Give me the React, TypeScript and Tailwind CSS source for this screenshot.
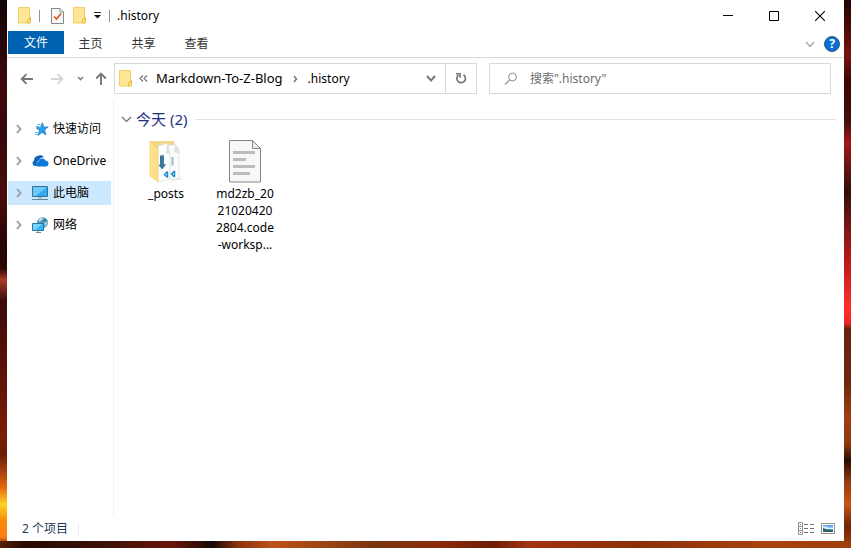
import type { ReactNode } from "react";

function FolderIcon() {
  return (
    <svg width="14" height="17" viewBox="0 0 14 17" aria-hidden="true">
      <path d="M.5.5h11v15.500H.5z" fill="#ffe695" stroke="#f0cf63" />
      <path d="M11.500 10.500h1v5.500h-3v-3.500h2z" fill="#ffe184" stroke="#e8c04a" />
    </svg>
  );
}

function CheckPageIcon() {
  return (
    <svg width="13" height="16" viewBox="0 0 13 16" aria-hidden="true">
      <path d="M.5.5h8.5l3.500 3.500v11.500H.5z" fill="#f8f8f8" stroke="#85898c" />
      <path d="M9 .5V4h3.500" fill="#fff" stroke="#85898c" />
      <path d="M3 8.500l2.500 2.500L10 5.500" fill="none" stroke="#e8571f" strokeWidth="1.700" />
    </svg>
  );
}

function Arrow({ kind }: { kind: "left" | "right" | "up" }) {
  const turn = { left: "", right: "rotate(180 7 7)", up: "rotate(90 7 7)" }[kind];
  return (
    <svg width="14" height="14" viewBox="0 0 14 14" aria-hidden="true">
      <path
        d="M13 7H2M6.500 2.200L1.700 7l4.800 4.800"
        transform={turn}
        fill="none"
        stroke={kind === "right" ? "#d4d4d4" : "#777"}
        strokeWidth="1.900"
      />
    </svg>
  );
}

type ChevronProps = { w: number; h: number; color: string; weight: number };

function ChevronDown({ w, h, color, weight }: ChevronProps) {
  return (
    <svg width={w} height={h} viewBox={`0 0 ${w} ${h}`} aria-hidden="true">
      <path d={`M1 1L${w / 2} ${h - 1.5}L${w - 1} 1`} fill="none" stroke={color} strokeWidth={weight} />
    </svg>
  );
}

function ChevronRight({ w, h, color, weight }: ChevronProps) {
  return (
    <svg width={w} height={h} viewBox={`0 0 ${w} ${h}`} aria-hidden="true">
      <path d={`M1 1L${w - 1.5} ${h / 2}L1 ${h - 1}`} fill="none" stroke={color} strokeWidth={weight} />
    </svg>
  );
}

function ChevronLeftPair() {
  return (
    <svg width="9" height="7" viewBox="0 0 9 7" aria-hidden="true">
      <path d="M4 .5l-3 3 3 3M8 .5l-3 3 3 3" fill="none" stroke="#777" strokeWidth="1.200" />
    </svg>
  );
}

function QuickAccessIcon() {
  return (
    <svg width="16" height="16" viewBox="0 0 16 16" aria-hidden="true">
      <path d="M9.500 1.500l1.100 4.400h4.600l-3.500 3 1.300 5.100-4-2.500-4 3 1.400-5L3 6.800l4.500-.6z" fill="#2b9fe8" stroke="#1579c4" strokeWidth=".6" />
      <path d="M4.500 3.500h3M3 5.500h3M2 11.500h3M2 13.500h3" stroke="#5db8ef" />
    </svg>
  );
}

function OneDriveIcon() {
  return (
    <svg width="17" height="16" viewBox="0 0 17 16" aria-hidden="true">
      <path d="M3 13a2.900 2.900 0 0 1-.8-5.500 4.200 4.200 0 0 1 3.300-4.400 4.500 4.500 0 0 1 6.600 1.300C9.500 4 7.800 5.500 7.200 7.500 4.800 7.800 3.800 10.500 5 13z" fill="#0a66bd" />
      <path d="M6.500 13.500a2.500 2.500 0 0 1 .2-5 3.600 3.600 0 0 1 6.900-.7 2.700 2.700 0 0 1 2.900 3 2.700 2.700 0 0 1-2.500 2.700z" fill="#0a78d7" />
    </svg>
  );
}

function ComputerIcon() {
  return (
    <svg width="17" height="16" viewBox="0 0 17 16" aria-hidden="true">
      <path d="M.5 1.500h15v10H.5z" fill="#36a9ee" stroke="#37738f" />
      <path d="M1 2h14L4 11H1z" fill="#6bc9fb" />
      <path d="M6 12h4v2H6z" fill="#a9c6d5" />
      <path d="M0 14.500h16" stroke="#6d8795" />
    </svg>
  );
}

function NetworkIcon() {
  return (
    <svg width="17" height="16" viewBox="0 0 17 16" aria-hidden="true">
      <circle cx="10.500" cy="5.700" r="5.500" fill="#4f94b8" />
      <path d="M6.500 2.500c2-2 4-1.800 5-1.300l-1.500 2.300-3 1.500z" fill="#b6d9e6" />
      <path d="M12 5l3.500-.5v3L13 9.500z" fill="#9bcbdc" />
      <path d="M12.500 1.500l2 2-1 1.500-2-1z" fill="#377a9c" />
      <path d="M.5 6.500h11v7H.5z" fill="#38b4f2" stroke="#27779e" />
      <path d="M1 7h9l-7 6H1z" fill="#7ad3fb" />
      <path d="M4 15.500h5M6 14v1" stroke="#688b9c" />
    </svg>
  );
}

function PostsFolderIcon() {
  return (
    <svg width="34" height="43" viewBox="0 0 34 43" aria-hidden="true">
      <path d="M1 1h24v30H9z" fill="#f3d688" />
      <path d="M30 37l4 2-14 3z" fill="#e9e9e9" />
      <path d="M18 6l8-2 4 5v30H18z" fill="#fbfbfb" stroke="#cfd4d8" strokeWidth=".6" />
      <path d="M9 6l9-3 3 10v26L9 42z" fill="#fdfdfd" stroke="#cfd4d8" strokeWidth=".6" />
      <path d="M18 3l-1 10 4 2z" fill="#e0e3e5" />
      <path d="M26 4l-1 8 5 2V9z" fill="#e0e3e5" />
      <path d="M11 15l1.300 1 1.300-1.300 1.300 1v8.500h2.300l-4 5.300-3.700-4.500 1.500-.5z" fill="#35789c" />
      <path d="M22.500 17v9l2-1v-8z" fill="#9cbfce" />
      <path d="M18.500 31.500l-3 3 3 3M18.500 31.500v6M25.500 31l-3 3 3 3M25.500 31v6" fill="none" stroke="#1b8dcc" strokeWidth="1.500" />
      <path d="M1 1l8 8v33L1 36z" fill="#ffe08a" stroke="#f4cb65" strokeWidth=".6" />
    </svg>
  );
}

function TextFileIcon() {
  return (
    <svg width="32" height="43" viewBox="0 0 32 43" aria-hidden="true">
      <path d="M.5.5h23l8 8v33.500H.5z" fill="#f8f8f8" stroke="#858585" />
      <path d="M23.500.5v8h8z" fill="#e9e9e9" stroke="#858585" />
      <path d="M4 12.500h22M4 19.500h13M4 26.500h22M4 33.500h17" stroke="#bdbdbd" strokeWidth="3" />
    </svg>
  );
}

function Backdrop() {
  return (
    <div aria-hidden="true" className="absolute inset-0 bg-[#7a2407]">
      <div className="absolute inset-y-0 left-0 w-2 bg-[linear-gradient(to_bottom,#120406_0%,#2a080a_9%,#42090c_17%,#35080a_24%,#4a0d0c_35%,#260504_45%,#2c0504_49%,#a63b27_51%,#3c0b08_55%,#611407_70%,#7b1c06_79%,#6b1c06_83%,#a64010_86%,#e36b0c_89%,#ffd228_92%,#f78a0b_95%,#ff7b16_98%,#3c1306_100%)]" />
      <div className="absolute inset-y-0 right-0 w-2 bg-[linear-gradient(to_bottom,#210507_0%,#4b0909_5%,#7a1110_10%,#3a0605_15%,#40100a_22%,#a01716_26%,#30100b_35%,#7e1714_42%,#b51918_47%,#ff2f2e_56%,#ed2524_59%,#68200f_60%,#6a2b10_70%,#a33c0e_76%,#8d3b0d_81%,#280e05_84%,#973c0e_88%,#c95313_92%,#702408_96%,#ab3c0a_100%)]" />
      <div className="absolute inset-x-0 bottom-0 h-[7px] bg-[linear-gradient(to_right,#552006_0%,#250902_3%,#3d1207_13%,#6b1409_20%,#180807_25%,#8a330d_28%,#be5118_32%,#7a360e_44%,#8b2908_52%,#6d1c07_58%,#a33210_62%,#8a3009_75%,#a9420e_90%,#9e3d0a_100%)]" />
    </div>
  );
}

function NavItem({ label, icon, selected = false }: { label: string; icon: ReactNode; selected?: boolean }) {
  return (
    <li>
      <button
        type="button"
        className={
          selected
            ? "flex h-6 w-full items-center bg-[#cce8ff] pl-2 text-left"
            : "flex h-6 w-full items-center pl-2 text-left"
        }
      >
        <ChevronRight w={6} h={10} color="#9b9b9b" weight={1.8} />
        <span className="ml-2.5 flex w-[17px] justify-center">{icon}</span>
        <span className="ml-1 whitespace-nowrap">{label}</span>
      </button>
    </li>
  );
}

const ribbonTabs = ["主页", "共享", "查看"];

export default function App() {
  return (
    <div className="relative h-screen overflow-hidden px-[7px] pb-[7px] font-['Noto_Sans','Noto_Sans_CJK_SC',sans-serif] text-xs text-black">
      <Backdrop />
      <div className="relative flex h-full flex-col bg-white">
        <header className="flex h-[31px] shrink-0 items-center pl-[11px]">
          <FolderIcon />
          <span className="ml-[7px] h-3 w-px bg-[#929292]" />
          <button type="button" aria-label="属性" className="ml-[11px]"><CheckPageIcon /></button>
          <button type="button" aria-label="新建文件夹" className="ml-[9px]"><FolderIcon /></button>
          <button type="button" aria-label="自定义快速访问工具栏" className="ml-[7px]">
            <svg width="7" height="7" viewBox="0 0 7 7" aria-hidden="true">
              <path d="M0 .5h7" stroke="#222" />
              <path d="M0 3h7L3.500 6.500z" fill="#111" />
            </svg>
          </button>
          <span className="ml-2 h-3 w-px bg-[#929292]" />
          <h1 className="ml-[7px]">.history</h1>
          <div className="ml-auto flex h-full">
            <button type="button" aria-label="最小化" className="flex w-[46px] items-center justify-center">
              <svg width="10" height="11" viewBox="0 0 10 11"><path d="M0 5.500h10" stroke="#000" /></svg>
            </button>
            <button type="button" aria-label="最大化" className="flex w-[45px] items-center justify-center">
              <svg width="10" height="10" viewBox="0 0 10 10"><path d="M.5.500h9v9h-9z" fill="none" stroke="#000" /></svg>
            </button>
            <button type="button" aria-label="关闭" className="flex w-12 items-center justify-center">
              <svg width="10" height="10" viewBox="0 0 10 10"><path d="M0 0l10 10M10 0L0 10" stroke="#000" strokeWidth="1.100" /></svg>
            </button>
          </div>
        </header>

        <nav aria-label="功能区" className="flex h-[27px] shrink-0 items-start border-b border-[#dadbdc] pl-px text-[#333]">
          <button type="button" className="h-[23px] w-14 bg-[#0063b1] text-white">文件</button>
          {ribbonTabs.map((tab) => (
            <button key={tab} type="button" className="h-[25px] w-[53px]">{tab}</button>
          ))}
          <div className="ml-auto flex h-6 items-center gap-[9px] pt-0.5 pr-1">
            <button type="button" aria-label="展开功能区">
              <ChevronDown w={10} h={7} color="#a5a5a5" weight={1.3} />
            </button>
            <button type="button" aria-label="帮助" className="size-4 rounded-full border border-[#2b5c88] bg-[#0a70d0] text-xs leading-[14px] font-bold text-white">?</button>
          </div>
        </nav>

        <div className="flex shrink-0 items-center pt-[5px] pr-[13px] pb-1">
          <div className="flex w-[107px] shrink-0 items-center pl-[13px]">
            <button type="button" aria-label="后退"><Arrow kind="left" /></button>
            <button type="button" aria-label="前进" className="ml-4"><Arrow kind="right" /></button>
            <button type="button" aria-label="最近位置" className="ml-[13px]">
              <ChevronDown w={7} h={5} color="#808080" weight={1.6} />
            </button>
            <button type="button" aria-label="上移" className="ml-2.5"><Arrow kind="up" /></button>
          </div>
          <div className="flex h-[31px] flex-[363] items-stretch border border-[#d9d9d9]">
            <div className="flex flex-1 items-center pl-1">
              <FolderIcon />
              <button type="button" aria-label="上级文件夹" className="ml-1.5 flex">
                <ChevronLeftPair />
              </button>
              <button type="button" className="ml-2 whitespace-nowrap text-[13px]">Markdown-To-Z-Blog</button>
              <span className="mx-2.5"><ChevronRight w={5} h={8} color="#777" weight={1.5} /></span>
              <button type="button">.history</button>
            </div>
            <button type="button" aria-label="以前的位置" className="flex w-7 items-center justify-center">
              <ChevronDown w={10} h={7} color="#777" weight={1.9} />
            </button>
            <button type="button" aria-label="刷新" className="flex w-[31px] items-center justify-center border-l border-[#d9d9d9]">
              <svg width="12" height="13" viewBox="0 0 12 13" aria-hidden="true">
                <path d="M8.500 2.800a4.300 4.300 0 1 1-5 .2" fill="none" stroke="#777" strokeWidth="1.700" />
                <path d="M1 1.800h4v4" fill="none" stroke="#777" strokeWidth="1.600" />
              </svg>
            </button>
          </div>
          <label className="ml-3 flex h-[31px] flex-[342] items-center border border-[#d9d9d9]">
            <svg className="ml-3.5 shrink-0" width="14" height="14" viewBox="0 0 14 14" aria-hidden="true">
              <circle cx="8.500" cy="5" r="3.900" fill="none" stroke="#8c8c8c" />
              <path d="M5.700 7.800L1 12.500" stroke="#8c8c8c" strokeWidth="1.200" />
            </svg>
            <input type="search" aria-label="搜索" placeholder={'搜索".history"'} className="ml-3 w-full min-w-0 bg-transparent outline-none placeholder:text-[#6d6d6d]" />
          </label>
        </div>

        <div className="flex min-h-0 flex-1 pt-0.5">
          <nav aria-label="导航窗格" className="w-[107px] shrink-0 border-r border-[#f2f2f2] pt-[17px] pr-0.5 pl-px">
            <ul className="flex flex-col gap-2">
              <NavItem label="快速访问" icon={<QuickAccessIcon />} />
              <NavItem label="OneDrive" icon={<OneDriveIcon />} />
              <NavItem label="此电脑" icon={<ComputerIcon />} selected />
              <NavItem label="网络" icon={<NetworkIcon />} />
            </ul>
          </nav>
          <main className="min-w-0 flex-1 pt-2 pr-2 pl-[7px]">
            <h2 className="flex items-center text-[15px] leading-[22px] text-[#1e3287]">
              <ChevronDown w={11} h={7} color="#6c6c6c" weight={1.2} />
              <span className="ml-1 whitespace-nowrap">今天 (2)</span>
              <span className="ml-2 h-px flex-1 bg-[#e2e2e2]" />
            </h2>
            <ul className="mt-2.5 ml-2 flex gap-2 text-center leading-[17px]">
              <li>
                <button type="button" className="flex w-[74px] flex-col items-center">
                  <PostsFolderIcon />
                  <span className="mt-0.5">_posts</span>
                </button>
              </li>
              <li>
                <button type="button" className="flex w-[68px] flex-col items-center">
                  <TextFileIcon />
                  <span className="mt-0.5">md2zb_20<br />21020420<br />2804.code<br />-worksp...</span>
                </button>
              </li>
            </ul>
          </main>
        </div>

        <footer className="flex h-[25px] shrink-0 items-center pr-[9px] pl-[15px] text-[#1e395b]">
          <span>2 个项目</span>
          <span className="ml-2.5 h-3 w-px bg-[#eaeaea]" />
          <div className="ml-auto flex items-center gap-[7px]">
            <button type="button" aria-label="详细信息">
              <svg width="16" height="13" viewBox="0 0 16 13" aria-hidden="true">
                <path d="M.5.500h4v12h-4zM.5 4.500h4M.5 8.500h4" fill="#fff" stroke="#929292" />
                <path d="M6 2.500h4M12 2.500h4M6 6.500h4M12 6.500h4M6 10.500h4M12 10.500h4" stroke="#707070" />
                <path d="M2 2h1v1H2z" fill="#487d66" />
                <path d="M2 6h1v1H2z" fill="#3c7ee8" />
                <path d="M2 10h1v1H2z" fill="#d91f1f" />
              </svg>
            </button>
            <button type="button" aria-label="大缩略图">
              <svg width="14" height="11" viewBox="0 0 14 11" aria-hidden="true">
                <path d="M.5.500h13v10H.5z" fill="#fff" stroke="#929292" />
                <path d="M2 2h10v7H2z" fill="#68a9f5" />
                <path d="M3 3.500h3l1 1h5V6H2V4z" fill="#d9efff" />
                <path d="M2 5l4 1.500 6 .5v2H2z" fill="#28655c" />
              </svg>
            </button>
          </div>
        </footer>
      </div>
    </div>
  );
}
